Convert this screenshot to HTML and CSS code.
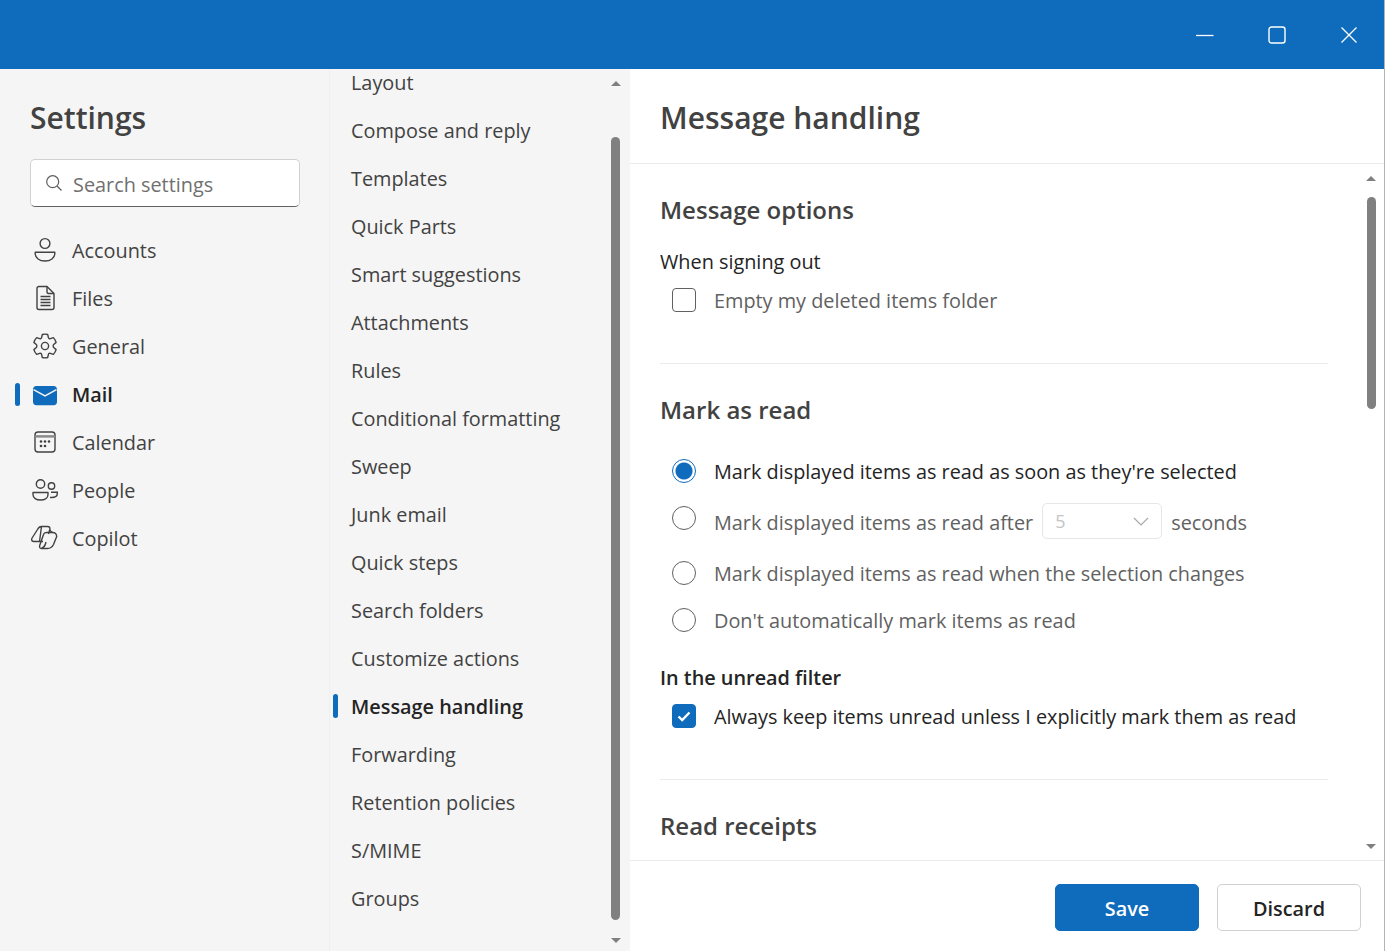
FILE: index.html
```html
<!DOCTYPE html>
<html lang="en">
<head>
<meta charset="utf-8">
<title>Settings</title>
<link rel="stylesheet" href="styles.css">
</head>
<body>
<div class="window">
  <header class="titlebar">
    <button class="win-btn" aria-label="Minimize"><svg width="18" height="18" viewBox="0 0 18 18"><path d="M0 9.5H17.5" stroke="#fff" stroke-width="1.3" fill="none"/></svg></button>
    <button class="win-btn" aria-label="Maximize"><svg width="18" height="18" viewBox="0 0 18 18"><rect x="1" y="1" width="16" height="16" rx="2.5" stroke="#fff" stroke-width="1.4" fill="none"/></svg></button>
    <button class="win-btn" aria-label="Close"><svg width="18" height="18" viewBox="0 0 18 18"><path d="M1.5 1.5L16.5 16.5M16.5 1.5L1.5 16.5" stroke="#fff" stroke-width="1.3" fill="none"/></svg></button>
  </header>
  <div class="panes">
    <nav class="side">
      <h1 class="side-title">Settings</h1>
      <div class="search">
        <svg class="search-icon" width="18" height="18" viewBox="0 0 18 18"><circle cx="7.7" cy="7.7" r="6" stroke="#5f5f5f" stroke-width="1.2" fill="none"/><path d="M12 12L16.5 16.5" stroke="#5f5f5f" stroke-width="1.2"/></svg>
        <span class="search-text">Search settings</span>
      </div>
      <ul class="cat-list">
        <li class="cat"><svg class="cat-icon" width="26" height="26" viewBox="0 0 26 26" fill="none" stroke="#424242" stroke-width="1.4"><circle cx="13" cy="6.5" r="4.9"/><path d="M3.2 15.2H22.8V16.5C22.8 21 18.5 24 13 24S3.2 21 3.2 16.5Z" stroke-linejoin="round"/></svg>Accounts</li>
        <li class="cat"><svg class="cat-icon" width="26" height="26" viewBox="0 0 26 26" fill="none" stroke="#424242" stroke-width="1.4"><path d="M5 3.5C5 2.4 5.9 1.5 7 1.5H15L22 8.5V22.500C22 23.600 21.100 24.500 20 24.500H7C5.900 24.500 5 23.600 5 22.500Z" stroke-linejoin="round"/><path d="M15 1.500V7C15 8 15.700 8.500 16.500 8.500H22M8.500 11.500H18.500M8.500 14.500H18.500M8.500 17.500H18.500M8.500 20.500H18.500"/></svg>Files</li>
        <li class="cat"><svg class="cat-icon" width="26" height="26" viewBox="0 0 26 26" fill="none" stroke="#424242" stroke-width="1.4" stroke-linejoin="round"><path d="M10.300 1.500C12 1 14 1 15.700 1.500L16.400 4.600C16.600 5.500 17.600 6 18.400 5.700L21.400 4.600C22.600 5.900 23.600 7.600 24.100 9.400L21.700 11.500C21 12.100 21 13.900 21.700 14.500L24.100 16.600C23.600 18.400 22.600 20.100 21.400 21.400L18.400 20.300C17.600 20 16.600 20.500 16.400 21.400L15.700 24.500C14 25 12 25 10.300 24.500L9.600 21.400C9.400 20.500 8.400 20 7.600 20.300L4.600 21.400C3.400 20.100 2.400 18.400 1.900 16.600L4.300 14.500C5 13.900 5 12.100 4.300 11.500L1.900 9.400C2.400 7.600 3.400 5.900 4.600 4.600L7.600 5.700C8.400 6 9.400 5.500 9.600 4.600Z"/><circle cx="13" cy="13" r="3.600"/></svg>General</li>
        <li class="cat cat-active"><svg class="cat-icon" width="26" height="26" viewBox="0 0 26 26"><path d="M1 8.200C1 6.400 2.400 5 4.200 5H21.800C23.600 5 25 6.400 25 8.200V21C25 22.800 23.600 24.200 21.800 24.200H4.200C2.400 24.200 1 22.800 1 21Z" fill="#0f6cbd"/><path d="M1.500 8.700L13 15L24.500 8.700" stroke="#f5f5f5" stroke-width="1.500" fill="none"/></svg>Mail</li>
        <li class="cat"><svg class="cat-icon" width="26" height="26" viewBox="0 0 26 26" fill="none" stroke="#424242" stroke-width="1.400"><rect x="3" y="3" width="20" height="20" rx="3"/><path d="M3 7.400H23" stroke="#8a8a8a" stroke-width="2.500"/><g fill="#424242" stroke="none"><circle cx="9" cy="12.500" r="1.300"/><circle cx="13" cy="12.500" r="1.300"/><circle cx="17" cy="12.500" r="1.300"/><circle cx="9" cy="17" r="1.300"/><circle cx="13" cy="17" r="1.300"/></g></svg>Calendar</li>
        <li class="cat"><svg class="cat-icon" width="26" height="26" viewBox="0 0 26 26" fill="none" stroke="#424242" stroke-width="1.400"><circle cx="8.500" cy="7" r="4.200"/><path d="M1 15.500H16V17.500C16 21 12.800 23 8.500 23S1 21 1 17.500Z" stroke-linejoin="round"/><circle cx="19.500" cy="9" r="3.200"/><path d="M19 15.300H25.300V16.500C25.300 19 23 20.500 19.500 20.500H18"/></svg>People</li>
        <li class="cat"><svg class="cat-icon cat-icon-wide" width="28" height="26" viewBox="0 0 28 26" fill="none" stroke="#424242" stroke-width="1.400" stroke-linejoin="round"><path d="M11.500 1.500H17.500Q20.500 1.500 19.800 4.500L18.500 9M9.500 16.500H4Q1 16.500 1.800 13.500L7.500 4.500Q9 1.500 11.500 1.500Z"/><path d="M17.500 23.500H11.500Q9 23.500 9.700 20.500L13.500 9.500Q14 7.500 16.500 7.500H22.500Q26.500 7.500 26.700 11.500L23.500 19.500Q21.500 23.500 17.500 23.500Z"/><path d="M9.500 16.500H13M19.500 4.500Q21 7 22.500 7.500M11.500 23.500Q15 22 16 17"/></svg>Copilot</li>
      </ul>
    </nav>
    <nav class="sub">
      <ul class="sub-list">
        <li class="sub-item">Layout</li>
        <li class="sub-item">Compose and reply</li>
        <li class="sub-item">Templates</li>
        <li class="sub-item">Quick Parts</li>
        <li class="sub-item">Smart suggestions</li>
        <li class="sub-item">Attachments</li>
        <li class="sub-item">Rules</li>
        <li class="sub-item">Conditional formatting</li>
        <li class="sub-item">Sweep</li>
        <li class="sub-item">Junk email</li>
        <li class="sub-item">Quick steps</li>
        <li class="sub-item">Search folders</li>
        <li class="sub-item">Customize actions</li>
        <li class="sub-item sub-active">Message handling</li>
        <li class="sub-item">Forwarding</li>
        <li class="sub-item">Retention policies</li>
        <li class="sub-item">S/MIME</li>
        <li class="sub-item">Groups</li>
      </ul>
      <div class="arrow arrow-up sub-up"></div>
      <div class="thumb sub-thumb"></div>
      <div class="arrow arrow-down sub-down"></div>
    </nav>
    <main class="main">
      <h2 class="main-title">Message handling</h2>
      <div class="scroller">
        <section class="sec sec-options">
          <h3 class="sec-title">Message options</h3>
          <div class="label">When signing out</div>
          <div class="opt opt-signout"><span class="box"></span><span class="muted">Empty my deleted items folder</span></div>
        </section>
        <section class="sec sec-read">
          <h3 class="sec-title">Mark as read</h3>
          <div class="opt opt-first"><span class="radio radio-on"></span><span class="strong-text">Mark displayed items as read as soon as they're selected</span></div>
          <div class="opt opt-after"><span class="radio"></span><span class="muted">Mark displayed items as read after</span><span class="select"><span class="select-value">5</span><svg width="16" height="9" viewBox="0 0 16 9"><path d="M1 1L8 8L15 1" stroke="#a8a8a8" stroke-width="1.200" fill="none"/></svg></span><span class="muted">seconds</span></div>
          <div class="opt opt-change"><span class="radio"></span><span class="muted">Mark displayed items as read when the selection changes</span></div>
          <div class="opt opt-never"><span class="radio"></span><span class="muted">Don't automatically mark items as read</span></div>
          <div class="label label-filter">In the unread filter</div>
          <div class="opt opt-keep"><span class="box box-on"><svg width="14" height="11" viewBox="0 0 14 11"><path d="M1.500 5.500L5.200 9L12.500 1.500" stroke="#fff" stroke-width="2.400" fill="none"/></svg></span><span class="strong-text">Always keep items unread unless I explicitly mark them as read</span></div>
        </section>
        <section class="sec sec-receipts">
          <h3 class="sec-title">Read receipts</h3>
        </section>
        <div class="arrow arrow-up main-up"></div>
        <div class="thumb main-thumb"></div>
        <div class="arrow arrow-down main-down"></div>
      </div>
      <footer class="footer">
        <button class="btn btn-primary">Save</button>
        <button class="btn">Discard</button>
      </footer>
    </main>
  </div>
</div>
</body>
</html>
```
FILE: styles.css
```css
* { box-sizing: border-box; }
html, body { margin: 0; height: 100%; overflow: hidden; }
body { font-family: "Open Sans", "Noto Sans", sans-serif; color: #424242; background: #fff; font-size: 19.85px; }
ul { list-style: none; margin: 0; padding: 0; }
h1, h2, h3 { margin: 0; font-weight: 600; }
button { font: inherit; }

.window { display: flex; flex-direction: column; height: 951px; border-right: 1px solid #b4b4b4; }
.titlebar { height: 69px; flex: none; background: #0f6cbd; display: flex; justify-content: flex-end; align-items: center; }
.win-btn { width: 72px; height: 69px; padding: 0 0 0 2px; border: 0; background: none; display: flex; align-items: center; justify-content: center; }

.panes { flex: 1; display: flex; min-height: 0; }

.side { width: 330px; flex: none; background: #f5f5f5; border-right: 1px solid #efefef; padding: 0 0 0 30px; }
.side-title { font-size: 30px; line-height: 40px; margin-top: 29px; color: #424242; }
.search { width: 270px; height: 48px; margin-top: 21px; background: #fff; border: 1px solid #d1d1d1; border-bottom-color: #616161; border-radius: 5px; display: flex; align-items: center; padding-left: 14px; gap: 10px; }
.search-text { color: #707070; margin-top: 2px; }
.cat-list { margin-top: 19px; }
.cat { height: 48px; display: flex; align-items: center; gap: 14px; position: relative; }
.cat-icon { flex: none; margin-left: 2px; }
.cat-icon-wide { margin-left: 0; }
.cat-active { font-weight: 600; color: #242424; }
.cat-active::before { content: ""; position: absolute; left: -15px; top: 13px; width: 5px; height: 23px; border-radius: 3px; background: #0f6cbd; }

.sub { width: 300px; flex: none; background: #f5f5f5; position: relative; overflow: hidden; padding-left: 21px; }
.sub-list { margin-top: -11px; }
.sub-item { height: 48px; display: flex; align-items: center; position: relative; }
.sub-active { font-weight: 600; color: #242424; }
.sub-active::before { content: ""; position: absolute; left: -18px; top: 12px; width: 5px; height: 24px; border-radius: 3px; background: #0f6cbd; }

.arrow { position: absolute; width: 0; height: 0; border-left: 5px solid transparent; border-right: 5px solid transparent; }
.arrow-up { border-bottom: 5px solid #808080; }
.arrow-down { border-top: 5px solid #808080; }
.thumb { position: absolute; width: 9px; background: #808080; border-radius: 5px; }
.sub-up { left: 281px; top: 12px; }
.sub-thumb { left: 281px; top: 68px; height: 783px; }
.sub-down { left: 281px; top: 869px; }

.main { flex: 1; min-width: 0; display: flex; flex-direction: column; background: #fff; }
.main-title { height: 95px; flex: none; padding: 28px 0 0 30px; font-size: 30px; line-height: 42px; border-bottom: 1px solid #ebebeb; }
.scroller { flex: 1; min-height: 0; position: relative; overflow: hidden; padding: 0 56px 0 30px; }
.sec { border-bottom: 1px solid #ebebeb; }
.sec-title { font-size: 24px; line-height: 32px; }
.sec-options { height: 200px; padding-top: 30px; }
.sec-read { height: 416px; padding-top: 30px; }
.sec-receipts { border-bottom: 0; padding-top: 30px; }
.label { line-height: 28px; margin-top: 22px; color: #242424; }
.label-filter { margin-top: 30px; font-weight: 600; }
.opt { display: flex; align-items: center; margin-left: 12px; height: 28px; gap: 18px; }
.opt-signout { margin-top: 10px; }
.opt-first { margin-top: 31px; }
.opt-after { margin-top: 22px; }
.opt-after .muted { margin-top: 2px; }
.opt-after .radio { margin-bottom: 6px; }
.opt-change { margin-top: 24px; }
.opt-never { margin-top: 19px; }
.opt-keep { margin-top: 10px; }
.muted { color: #616161; }
.strong-text { color: #242424; }
.box { width: 24px; height: 24px; border: 1px solid #616161; border-radius: 4px; flex: none; display: flex; align-items: center; justify-content: center; }
.box-on { background: #0f6cbd; border-color: #0f6cbd; }
.radio { width: 24px; height: 24px; border: 1px solid #616161; border-radius: 50%; flex: none; }
.radio-on { border-color: #0f6cbd; background: radial-gradient(circle, #0f6cbd 0 8px, #fff 9px); }
.select { width: 120px; height: 36px; border: 1px solid #e6e6e6; border-radius: 5px; display: flex; align-items: center; justify-content: space-between; padding: 0 12px; margin: 0 -9px; flex: none; }
.select-value { color: #c4c4c4; font-size: 18px; }
.main-up { left: 736px; top: 12px; }
.main-thumb { left: 737px; top: 33px; height: 212px; }
.main-down { left: 736px; top: 680px; }

.footer { height: 91px; flex: none; border-top: 1px solid #ebebeb; display: flex; justify-content: flex-end; align-items: flex-start; gap: 18px; padding: 23px 23px 0 0; }
.btn { width: 144px; height: 47px; border: 1px solid #d1d1d1; border-radius: 5px; background: #fff; color: #242424; font-weight: 600; padding: 2px 0 0; }
.btn-primary { background: #0f6cbd; border-color: #0f6cbd; color: #fff; }
```
